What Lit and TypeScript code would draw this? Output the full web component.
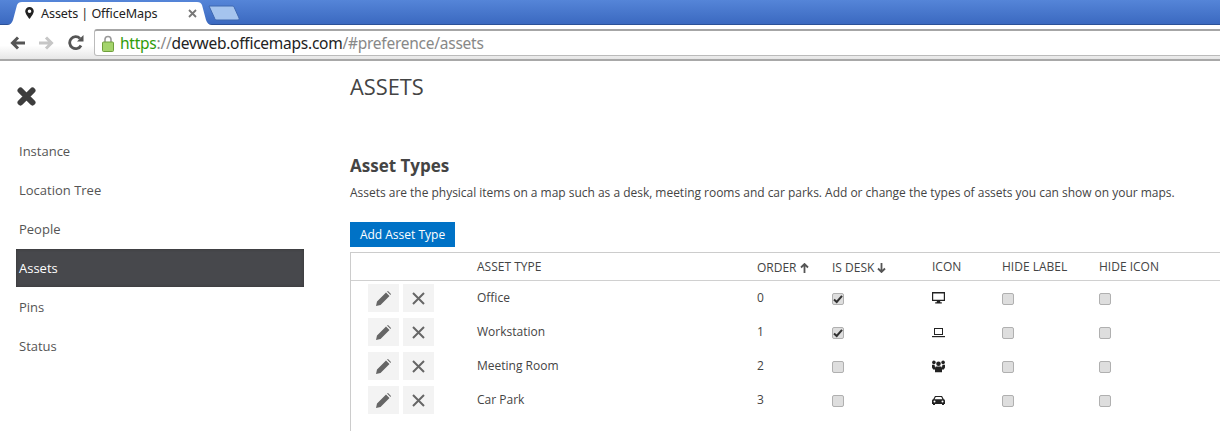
import { LitElement, html, css, svg } from "lit";
import { customElement } from "lit/decorators.js";

const rows = [
  { name: "Office", order: 0, desk: true, icon: "monitor" },
  { name: "Workstation", order: 1, desk: true, icon: "laptop" },
  { name: "Meeting Room", order: 2, desk: false, icon: "group" },
  { name: "Car Park", order: 3, desk: false, icon: "car" },
];

const icons: Record<string, unknown> = {
  monitor: svg`<path fill-rule="evenodd" d="M0 0h13v9H8.200v1.200h1.600V11.500H3.200v-1.300h1.600V9H0zM1.200 1.400v6.400h10.600V1.400z"/>`,
  laptop: svg`<path fill-rule="evenodd" d="M2 2h9v7H2zM3 3v5h7V3z"/><path d="M0 10h13v1.200H0z"/>`,
  group: svg`<circle cx="6.500" cy="3.800" r="2.300"/><circle cx="1.900" cy="2.400" r="1.800"/><circle cx="11.100" cy="2.400" r="1.800"/><path d="M0 4.800h2.500L3 7v2.500H1.200L0 7.500zM13 4.800h-2.500L10 7v2.500h1.800L13 7.500z"/><path d="M3.800 6.500h5.400l.8 1v4.800H3V7.500z"/>`,
  car: svg`<path fill-rule="evenodd" d="M3 2h7l1.800 3.200c.9.2 1.200.8 1.200 1.800v3h-1v1h-2v-1H3v1H1v-1H0V7c0-1 .3-1.600 1.200-1.800zM3.700 3 2.600 5.200h7.800L9.300 3zM2.500 6.500a1 1 0 1 0 0 2 1 1 0 0 0 0-2zm8 0a1 1 0 1 0 0 2 1 1 0 0 0 0-2z"/>`,
};

@customElement("app-root")
export class AppRoot extends LitElement {
  static styles = css`
    :host { display: block; width: 1220px; height: 431px; overflow: hidden; background: #fff; font-family: "Open Sans", "Noto Sans", sans-serif; color: #444; }
    * { box-sizing: border-box; }
    .strip { height: 25px; background: linear-gradient(#5585d8, #3a68bf); box-shadow: inset 0 -1px #2c5197; display: flex; align-items: flex-end; padding-left: 7px; overflow: hidden; }
    .tab { position: relative; width: 205px; height: 24px; display: flex; align-items: center; padding-left: 18px; }
    .tab-shape { position: absolute; left: 0; top: 0; }
    .tab > :not(.tab-shape) { position: relative; }
    .tab-title { font: 12.600px "Noto Sans", sans-serif; letter-spacing: -.1px; color: #222; margin-left: 7px; width: 147px; white-space: nowrap; }
    .newtab { margin: 0 0 4px -4px; display: block; }
    .toolbar { height: 36px; background: linear-gradient(#fff 60%, #e6e6e6); border-bottom: 2px solid #a8a8a8; display: flex; align-items: flex-start; padding: 4px 0 0 10px; }
    .nav-ic { display: flex; gap: 14px; align-items: center; height: 27px; width: 84px; }
    .address { flex: 1; height: 27px; margin-right: -4px; background: #fff; border: 1px solid #bbb; border-top: 2px solid #a6a6a6; border-radius: 3px 0 0 3px; display: flex; align-items: center; padding-left: 7px; font: 15.500px "Noto Sans", sans-serif; letter-spacing: -.25px; white-space: nowrap; }
    .lock { margin-right: 6px; }
    .g { color: #2f9c0a; } .d { color: #222; } .m { color: #888; }
    .page { display: flex; height: 370px; }
    .side { width: 350px; flex: none; padding: 0 0 0 16px; }
    .close { height: 71px; padding: 26px 0 0 1px; }
    .close svg { display: block; }
    .nav { width: 288px; display: flex; flex-direction: column; gap: 1px; font-size: 13px; color: #555; }
    .nav div { height: 38px; line-height: 38px; padding-left: 3px; }
    .nav .on { background: #47484c; color: #fff; box-shadow: inset 0 0 3px #333; }
    .main { flex: 1; min-width: 0; }
    h1 { font-size: 21.800px; font-weight: 400; margin: 0; height: 93px; line-height: 28px; padding-top: 12px; color: #444; }
    h2 { font-size: 17px; font-weight: 700; margin: 0; height: 26px; line-height: 24px; color: #444; }
    p { font-size: 12px; letter-spacing: -.02px; margin: 0; height: 42px; line-height: 16px; color: #444; padding-top: 5px; white-space: nowrap; }
    .add { display: block; width: 105px; height: 25px; border: 0; padding: 0; background: #0072c6; color: #fff; font: 12px "Open Sans", sans-serif; }
    .table { margin-top: 5px; width: 900px; height: 200px; border-left: 1px solid #ccc; border-top: 1px solid #ccc; }
    .tr { display: grid; grid-template-columns: 126px 280px 75px 100px 70px 97px 1fr; align-items: center; font-size: 12px; color: #444; }
    .head { height: 28px; border-bottom: 1px solid #d0d0d0; }
    .sorted { padding-top: 2px; }
    .body { height: 34px; }
    .label { margin-top: -2px; }
    .head .arrow { vertical-align: -1px; margin-left: 3px; }
    .acts { display: flex; gap: 4px; padding-left: 17px; }
    .btn { width: 31px; height: 28px; background: #f3f3f3; display: flex; align-items: center; justify-content: center; }
    .check { width: 12px; height: 12px; display: block; background: #dedede; border: 1px solid #b0b0b0; border-radius: 2px; margin-top: 2px; position: relative; }
    .check svg { position: absolute; left: 0; top: 0; }
    .icon { display: block; }
  `;

  private box(on: boolean) {
    return html`<span class="check">${on
      ? html`<svg width="10" height="10" viewBox="0 0 10 10"><path d="M1 5.500 3.700 8 9 1.800" fill="none" stroke="#333" stroke-width="2"/></svg>`
      : ""}</span>`;
  }

  private arrow(up: boolean) {
    return html`<svg class="arrow" width="9" height="10" viewBox="0 0 9 10"><path d="${up ? "M4.500 1v9M1 4.500 4.500 1 8 4.500" : "M4.500 0v9M1 5.500 4.500 9 8 5.500"}" fill="none" stroke="#555" stroke-width="1.800"/></svg>`;
  }

  render() {
    return html`
      <div class="strip">
        <div class="tab">
          <svg class="tab-shape" width="205" height="24" viewBox="0 0 205 24"><path d="M0 24C3 24 5 22 6 19L10 4C11 2 12 1 15 1H190C193 1 194 2 195 4L199 19C200 22 202 24 205 24Z" fill="#fff"/></svg>
          <svg width="9" height="12" viewBox="0 0 9 12"><path fill-rule="evenodd" d="M4.500 0A4.300 4.300 0 0 0 .2 4.300C.2 7 4.500 12 4.500 12S8.800 7 8.800 4.300A4.300 4.300 0 0 0 4.500 0zm0 2.500a1.800 1.800 0 1 1 0 3.600 1.800 1.800 0 0 1 0-3.600z" fill="#222"/></svg>
          <span class="tab-title">Assets | OfficeMaps</span>
          <svg width="9" height="9" viewBox="0 0 9 9"><path d="M1 1l7 7M8 1 1 8" stroke="#777" stroke-width="1.800"/></svg>
        </div>
        <svg class="newtab" width="32" height="16" viewBox="0 0 32 16"><path d="M1 1H24C25.500 1 26 1.500 26.500 3L31 13C31.500 14.500 31 15 29 15H9C7.500 15 7 14.500 6.500 13L1 1Z" fill="#a5c4ee" stroke="#3f68b0"/></svg>
      </div>
      <div class="toolbar">
        <div class="nav-ic">
          <svg width="15" height="14" viewBox="0 0 15 14"><path d="M15 7H3M8 1.500 2.500 7 8 12.500" fill="none" stroke="#555" stroke-width="3"/></svg>
          <svg width="15" height="14" viewBox="0 0 15 14"><path d="M0 7h12M7 1.500 12.500 7 7 12.500" fill="none" stroke="#c6c6c6" stroke-width="3"/></svg>
          <svg width="16" height="16" viewBox="0 0 16 16"><path d="M13 10.500A6 6 0 1 1 12 3.500" fill="none" stroke="#555" stroke-width="2.800"/><path d="M9 6.500h6.500V0z" fill="#555"/></svg>
        </div>
        <div class="address">
          <svg class="lock" width="12" height="17" viewBox="0 0 12 17"><path d="M3 7V4.500a3 3 0 0 1 6 0V7" fill="none" stroke="#999" stroke-width="1.600"/><rect x=".5" y="7" width="11" height="9.500" rx="1" fill="#a4d46c" stroke="#6f9f3c"/></svg>
          <span class="g">https</span><span class="m">://</span><span class="d">devweb.officemaps.com</span><span class="m">/#preference/assets</span>
        </div>
      </div>
      <div class="page">
        <div class="side">
          <div class="close"><svg width="19" height="19" viewBox="0 0 19 19"><path d="M3.500 3.500l12 12M15.500 3.500l-12 12" stroke="#3d3d3d" stroke-width="6" stroke-linecap="round"/></svg></div>
          <div class="nav">
            <div>Instance</div><div>Location Tree</div><div>People</div><div class="on">Assets</div><div>Pins</div><div>Status</div>
          </div>
        </div>
        <div class="main">
          <h1>ASSETS</h1>
          <h2>Asset Types</h2>
          <p>Assets are the physical items on a map such as a desk, meeting rooms and car parks. Add or change the types of assets you can show on your maps.</p>
          <button class="add">Add Asset Type</button>
          <div class="table">
            <div class="tr head">
              <span></span><span>ASSET TYPE</span>
              <span class="sorted">ORDER${this.arrow(true)}</span><span class="sorted">IS DESK${this.arrow(false)}</span>
              <span>ICON</span><span>HIDE LABEL</span><span>HIDE ICON</span>
            </div>
            ${rows.map((r) => html`
              <div class="tr body">
                <div class="acts">
                  <span class="btn"><svg width="15" height="15" viewBox="0 0 15 15"><path d="M0 15l1-4.500L10 1.500l3.500 3.500L4.500 14zM11 .5 12 0l3 3-.5 1z" fill="#666"/></svg></span>
                  <span class="btn"><svg width="13" height="13" viewBox="0 0 13 13"><path d="M1 1l11 11M12 1 1 12" stroke="#666" stroke-width="2"/></svg></span>
                </div>
                <span class="label">${r.name}</span>
                <span class="label">${r.order}</span>
                <span>${this.box(r.desk)}</span>
                <span><svg class="icon" width="13" height="13" viewBox="0 0 13 13" fill="#222">${icons[r.icon]}</svg></span>
                <span>${this.box(false)}</span>
                <span>${this.box(false)}</span>
              </div>`)}
          </div>
        </div>
      </div>
    `;
  }
}
